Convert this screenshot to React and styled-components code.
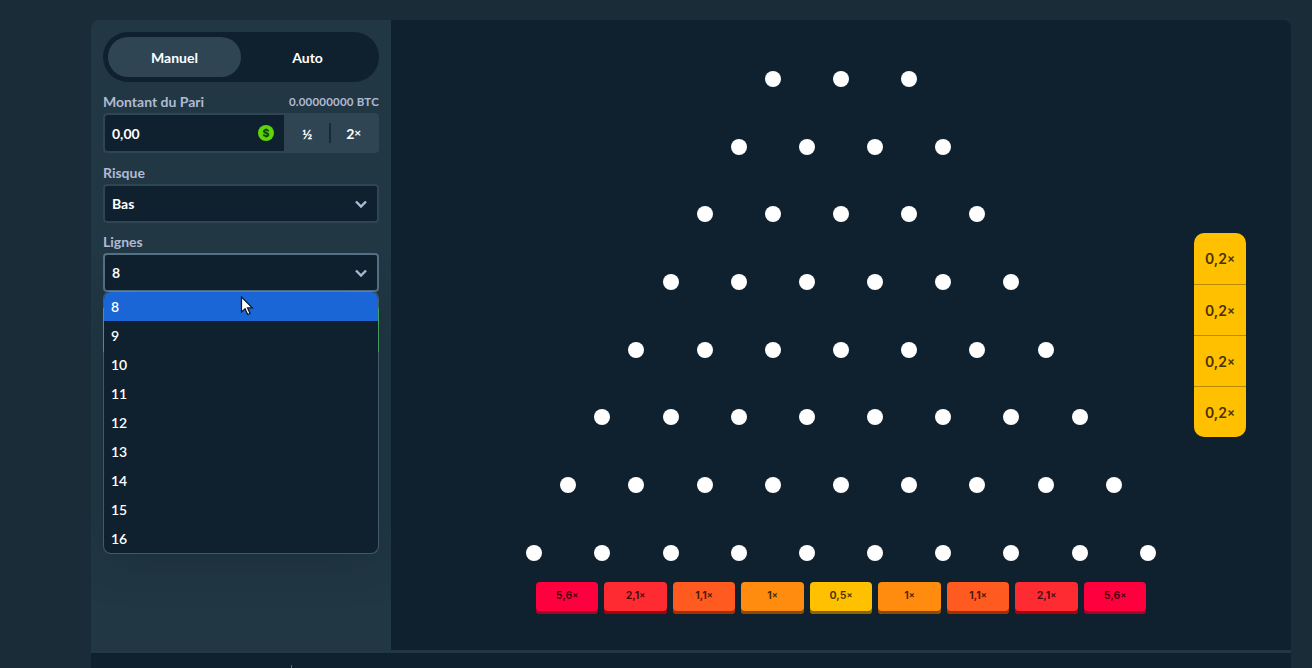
import styled, { createGlobalStyle } from 'styled-components';

const GlobalStyle = createGlobalStyle`
	html, body {
		margin: 0;
		padding: 0;
		height: 100%;
		overflow: hidden;
		background: #1a2c38;
	}
	* {
		box-sizing: border-box;
	}
`;

const Page = styled.div`
	width: 1312px;
	height: 668px;
	padding: 20px 21px 0 91px;
	font-family: 'Lato', 'Liberation Sans', sans-serif;
	overflow: hidden;
`;

const Game = styled.div`
	display: flex;
	height: 633px;
	border-radius: 8px 8px 0 0;
	overflow: hidden;
`;

const Sidebar = styled.aside`
	position: relative;
	width: 300px;
	flex: none;
	padding: 12px;
	display: flex;
	flex-direction: column;
	background: #213743;
`;

const Tabs = styled.div`
	display: flex;
	height: 50px;
	padding: 5px;
	border-radius: 25px;
	background: #0f212e;
`;

const Tab = styled.div`
	flex: 1;
	display: flex;
	align-items: center;
	justify-content: center;
	border-radius: 20px;
	font-size: 14px;
	font-weight: 700;
	color: #fff;
	background: ${(p) => (p.$active ? '#2f4553' : 'transparent')};
`;

const LabelRow = styled.div`
	display: flex;
	align-items: center;
	justify-content: space-between;
	height: 18px;
	margin-top: ${(p) => p.$top || 10}px;
	margin-bottom: 3px;
	font-size: 14px;
	font-weight: 700;
	color: #b1bad3;
`;

const Balance = styled.span`
	font-size: 11.5px;
	letter-spacing: 0.2px;
`;

const InputGroup = styled.div`
	display: flex;
	height: 40px;
	padding: 2px;
	border-radius: 4px;
	background: #2f4553;
`;

const AmountField = styled.div`
	flex: none;
	width: 179px;
	display: flex;
	align-items: center;
	justify-content: space-between;
	padding: 0 10px 0 7px;
	border-radius: 3px 0 0 3px;
	background: #0f212e;
	font-size: 14px;
	font-weight: 700;
	color: #fff;
`;

const HalfButton = styled.div`
	flex: 1;
	display: flex;
	align-items: center;
	justify-content: center;
	font-size: 14px;
	font-weight: 700;
	color: #fff;
	position: relative;

	&::after {
		content: '';
		display: ${(p) => (p.$divider ? 'block' : 'none')};
		position: absolute;
		right: 0;
		top: 8px;
		bottom: 8px;
		width: 2px;
		background: #0f212e;
		opacity: 0.75;
	}
`;

const Select = styled.div`
	height: 39px;
	padding: 0 9px 0 7px;
	display: flex;
	align-items: center;
	justify-content: space-between;
	border: 2px solid ${(p) => (p.$open ? '#557086' : '#2f4553')};
	border-radius: 4px;
	background: #0f212e;
	font-size: 14px;
	font-weight: 700;
	color: #fff;
`;

const BetButton = styled.div`
	height: 48px;
	margin-top: 14px;
	border-radius: 4px;
	background: #1fa83a;
`;

const Dropdown = styled.ul`
	position: absolute;
	left: 12px;
	top: 271px;
	width: 276px;
	margin: 0;
	padding: 0;
	list-style: none;
	border: 1px solid rgba(177, 186, 211, 0.28);
	border-radius: 8px;
	background: #0f212e;
	background-clip: padding-box;
	box-shadow: 0 8px 40px rgba(15, 33, 46, 0.35);
	overflow: hidden;
`;

const Option = styled.li`
	height: 29px;
	padding-left: 7px;
	display: flex;
	align-items: center;
	font-size: 14px;
	font-weight: 600;
	color: #fff;
	background: ${(p) => (p.$selected ? '#1a66d6' : 'transparent')};
`;

const Cursor = styled.svg`
	position: absolute;
	left: 149px;
	top: 276px;
`;

const Board = styled.main`
	position: relative;
	flex: 1;
	display: flex;
	flex-direction: column;
	align-items: center;
	padding-top: 51px;
	background: #0f212e;
	border-bottom: 3px solid #213743;
	height: 633px;
`;

const Pegs = styled.div`
	display: flex;
	flex-direction: column;
	align-items: center;
	gap: 51.7px;
`;

const PegRow = styled.div`
	display: flex;
	gap: 52.2px;
`;

const Peg = styled.span`
	display: block;
	width: 16px;
	height: 16px;
	border-radius: 50%;
	background: #fff;
`;

const Buckets = styled.div`
	display: flex;
	gap: 6px;
	margin-top: 21px;
`;

const Bucket = styled.div`
	width: 62.5px;
	height: 32px;
	padding-bottom: 5px;
	display: flex;
	align-items: center;
	justify-content: center;
	border-radius: 4px;
	font-family: 'Inter', sans-serif;
	font-size: 10.5px;
	font-weight: 700;
	color: rgba(0, 0, 0, 0.72);
	background: ${(p) => p.$color};
	box-shadow: inset 0 -3px 0 ${(p) => p.$shade};
`;

const Times = styled.span`
	font-size: 0.85em;
	position: relative;
	top: -1px;
`;

const History = styled.div`
	position: absolute;
	right: 45px;
	top: 213px;
	width: 52px;
	border-radius: 10px;
	overflow: hidden;
	background: #ffc000;
`;

const HistoryItem = styled.div`
	height: 51px;
	display: flex;
	align-items: center;
	justify-content: center;
	font-family: 'Inter', sans-serif;
	font-size: 14px;
	font-weight: 600;
	color: #4a3200;

	& + & {
		border-top: 1px solid #b98b00;
	}
`;

const Footer = styled.div`
	position: relative;
	height: 15px;
	background: #0f212e;

	&::after {
		content: '';
		position: absolute;
		left: 200px;
		bottom: 0;
		width: 1px;
		height: 3px;
		background: #557086;
	}
`;

const rows = [3, 4, 5, 6, 7, 8, 9, 10];
const lines = [8, 9, 10, 11, 12, 13, 14, 15, 16];
const buckets = [
	['5,6', '#ff003f', '#a60029'],
	['2,1', '#ff2b33', '#a60008'],
	['1,1', '#ff5a1f', '#a62f00'],
	['1', '#ff8c0f', '#8f4a00'],
	['0,5', '#ffc000', '#8f6400'],
	['1', '#ff8c0f', '#8f4a00'],
	['1,1', '#ff5a1f', '#a62f00'],
	['2,1', '#ff2b33', '#a60008'],
	['5,6', '#ff003f', '#a60029'],
];

const Chevron = () => (
	<svg width="14" height="14" viewBox="0 0 14 14" fill="none">
		<path d="M2 4.5 7 9.5 12 4.5" stroke="#b1bad3" strokeWidth="2.4" />
	</svg>
);

const Coin = () => (
	<svg width="16" height="16" viewBox="0 0 16 16">
		<circle cx="8" cy="8" r="8" fill="#5fd40a" />
		<text x="8" y="11.6" textAnchor="middle" fontSize="10.5" fontWeight="800" fill="#14420a" fontFamily="Inter, sans-serif">
			$
		</text>
	</svg>
);

const App = () => {
	return (
		<Page>
			<GlobalStyle />
			<Game>
				<Sidebar>
					<Tabs>
						<Tab $active>Manuel</Tab>
						<Tab>Auto</Tab>
					</Tabs>
					<LabelRow>
						<span>Montant du Pari</span>
						<Balance>0.00000000 BTC</Balance>
					</LabelRow>
					<InputGroup>
						<AmountField>
							0,00
							<Coin />
						</AmountField>
						<HalfButton $divider>½</HalfButton>
						<HalfButton>
							2<Times>×</Times>
						</HalfButton>
					</InputGroup>
					<LabelRow $top={10}>Risque</LabelRow>
					<Select>
						Bas
						<Chevron />
					</Select>
					<LabelRow $top={9}>Lignes</LabelRow>
					<Select $open>
						8
						<Chevron />
					</Select>
					<BetButton />
					<Dropdown>
						{lines.map((n) => (
							<Option key={n} $selected={n === 8}>
								{n}
							</Option>
						))}
					</Dropdown>
					<Cursor width="14" height="20" viewBox="0 0 14 20">
						<path d="M1.5 1v15l3.6-3.3 2.6 5.8 2.4-1-2.6-5.6h4.8z" fill="#fff" stroke="#0b1620" strokeWidth="1.2" />
					</Cursor>
				</Sidebar>
				<Board>
					<Pegs>
						{rows.map((count) => (
							<PegRow key={count}>
								{Array.from({ length: count }, (_, i) => (
									<Peg key={i} />
								))}
							</PegRow>
						))}
					</Pegs>
					<Buckets>
						{buckets.map(([value, color, shade], i) => (
							<Bucket key={i} $color={color} $shade={shade}>
								{value}
								<Times>×</Times>
							</Bucket>
						))}
					</Buckets>
					<History>
						{[0, 1, 2, 3].map((i) => (
							<HistoryItem key={i}>
								0,2<Times>×</Times>
							</HistoryItem>
						))}
					</History>
				</Board>
			</Game>
			<Footer />
		</Page>
	);
};

export default App;
